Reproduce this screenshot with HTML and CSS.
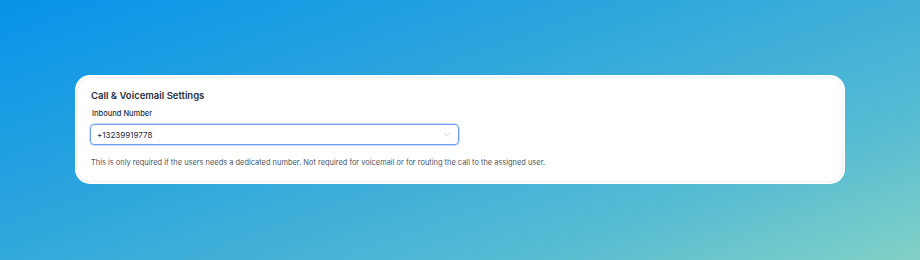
FILE: index.html
```html
<!DOCTYPE html>
<html lang="en">
<head>
    <meta charset="UTF-8">
    <meta name="viewport" content="width=device-width, initial-scale=1.0">
    <title>Call &amp; Voicemail Settings</title>
    <link rel="stylesheet" href="styles.css">
</head>
<body>
    <div class="page">
        <div class="card">
            <h2 class="card-title">Call &amp; Voicemail Settings</h2>
            <label class="field-label" for="inboundNumber">Inbound Number</label>
            <div class="select">
                <span class="select-value" id="inboundNumber">+13239919778</span>
                <svg class="select-arrow" width="8" height="5" viewBox="0 0 8 5" fill="none">
                    <path d="M1.5 1.2l2.5 2.5 2.5-2.5" stroke="#d0d4da" stroke-width="1" stroke-linecap="round" stroke-linejoin="round"/>
                </svg>
            </div>
            <p class="help-text">This is only required if the users needs a dedicated number. Not required for voicemail or for routing the call to the assigned user.</p>
        </div>
    </div>
</body>
</html>
```

FILE: styles.css
```css
* {
    margin: 0;
    padding: 0;
    box-sizing: border-box;
    font-family: 'Inter', 'Liberation Sans', sans-serif;
}

body {
    width: 920px;
    height: 260px;
    overflow: hidden;
    background: linear-gradient(160deg, #0793ea 0%, #2ea6dc 40%, #55bbd3 75%, #82d1c6 100%);
}

.page {
    padding: 75px 75px 0;
}

.card {
    display: flex;
    flex-direction: column;
    align-items: flex-start;
    height: 109px;
    padding: 14px 15px 0;
    background: #fff;
    border-radius: 15px;
    outline: 1px solid #eef0f3;
    outline-offset: -3px;
}

.card-title {
    font-size: 9.5px;
    line-height: 14px;
    font-weight: 600;
    color: #283142;
    margin-bottom: 5px;
    padding-left: 1px;
}

.field-label {
    font-size: 7.5px;
    line-height: 12px;
    font-weight: 500;
    color: #283142;
    margin-bottom: 4px;
    padding-left: 2px;
}

.select {
    display: flex;
    align-items: center;
    justify-content: space-between;
    width: 369px;
    height: 21px;
    padding: 0 7px 0 6px;
    border: 1px solid #6d9df4;
    border-radius: 4px;
    box-shadow: 0 0 0 0.5px #9dbcf7;
}

.select-value {
    font-size: 8px;
    color: #1f2937;
}

.select-arrow {
    display: block;
}

.help-text {
    margin-top: 13px;
    font-size: 7.45px;
    line-height: 10px;
    color: #4b5563;
    padding-left: 1px;
}
```
